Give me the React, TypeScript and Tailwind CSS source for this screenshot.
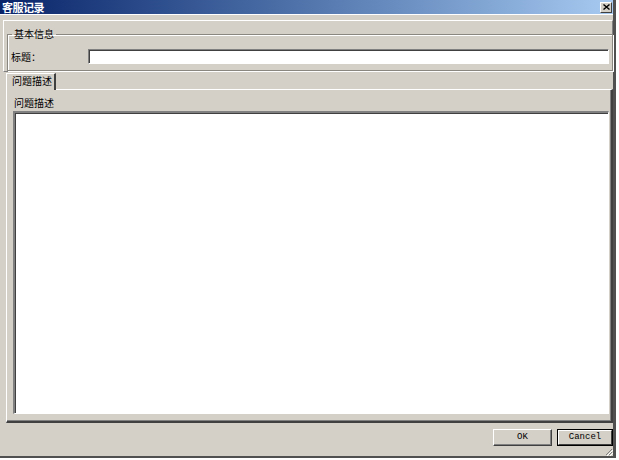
import React from "react";

export default function App() {
  return (
    <div className="w-[619px] h-[460px] bg-white font-['Noto_Sans_CJK_SC',sans-serif] text-black">
      <div className="w-[616px] h-[458px] bg-[#d4d0c8] border-r-[3px] border-b-[2px] border-[#505050] flex flex-col">
        {/* title bar */}
        <div className="h-[14px] flex items-center justify-between pl-[2px] pr-[1px] bg-linear-to-r from-[#0a246a] to-[#a6caf0]">
          <span className="text-white text-[11px] font-bold leading-none tracking-[-0.5px]">客服记录</span>
          <div className="w-[12px] h-[11px] bg-[#d4d0c8] border-t border-l border-white border-r border-b border-r-[#404040] border-b-[#404040] flex items-center justify-center">
            <svg width="7" height="6" viewBox="0 0 7 6">
              <path d="M0.5 0.5 L6.5 5.5 M6.5 0.5 L0.5 5.5" stroke="#000" strokeWidth="1.4" />
            </svg>
          </div>
        </div>
        <div className="h-px bg-white" />

        {/* top panel */}
        <div className="mt-[5px] ml-[3px] w-[610px] h-[52px] border-t border-l border-white border-r border-b border-r-[#808080] border-b-[#808080]">
          <fieldset className="ml-[3px] mt-[7px] w-[603px] h-[43px] border border-[#8a8780] shadow-[inset_1px_1px_0_#fff,1px_1px_0_#fff] px-[3px]">
            <legend className="ml-[1px] px-[2px] text-[10px] leading-[12px]">基本信息</legend>
            <div className="flex items-center mt-[9px]">
              <span className="w-[77px] text-[10px] leading-[12px]">标题：</span>
              <div className="w-[521px] h-[15px] bg-white border-t border-l border-[#808080] border-r border-b border-r-[#ffffff] border-b-[#ffffff] shadow-[inset_1px_1px_0_#404040]" />
            </div>
          </fieldset>
        </div>

        {/* tabs */}
        <div className="mt-[1px] ml-[6px] flex h-[16px]">
          <div className="w-[50px] h-[17px] bg-[#d4d0c8] border-t border-l border-white border-r-2 border-r-[#404040] pl-[5px] text-[10px] leading-[14px] relative z-10">
            问题描述
          </div>
        </div>
        <div className="ml-[6px] w-[607px] h-[334px] border-t border-l border-white border-r-2 border-b-2 border-r-[#404040] border-b-[#404040] shadow-[inset_-1px_-1px_0_#808080] flex flex-col">
          <div className="pl-[7px] pt-[7px] text-[10px] leading-[12px]">问题描述</div>
          <div className="ml-[6px] mt-[2px] w-[596px] h-[303px] bg-white border-t-2 border-l-2 border-t-[#808080] border-l-[#808080] border-r border-b border-r-white border-b-white shadow-[inset_1px_1px_0_#404040]" />
        </div>

        {/* buttons */}
        <div className="relative flex-1 flex justify-end items-start gap-[5px] pt-[6px] pr-[0px]">
          <button className="w-[59px] h-[17px] bg-[#d4d0c8] border-t border-l border-white border-r border-b border-r-[#404040] border-b-[#404040] shadow-[inset_-1px_-1px_0_#808080] font-['Liberation_Mono',monospace] text-[9px] leading-none flex items-center justify-center">
            OK
          </button>
          <button className="w-[56px] h-[17px] bg-[#d4d0c8] border border-black flex items-center justify-center p-0">
            <span className="w-full h-full border-t border-l border-white border-r border-b border-r-[#404040] border-b-[#404040] font-['Liberation_Mono',monospace] text-[9px] leading-none flex items-center justify-center">
              Cancel
            </span>
          </button>
          <svg className="absolute right-0 bottom-0" width="8" height="8" viewBox="0 0 8 8">
            <path d="M7 1 L1 7 M7 4 L4 7" stroke="#808080" strokeWidth="1" />
            <path d="M8 2 L2 8 M8 5 L5 8" stroke="#ffffff" strokeWidth="1" />
          </svg>
        </div>
      </div>
    </div>
  );
}
